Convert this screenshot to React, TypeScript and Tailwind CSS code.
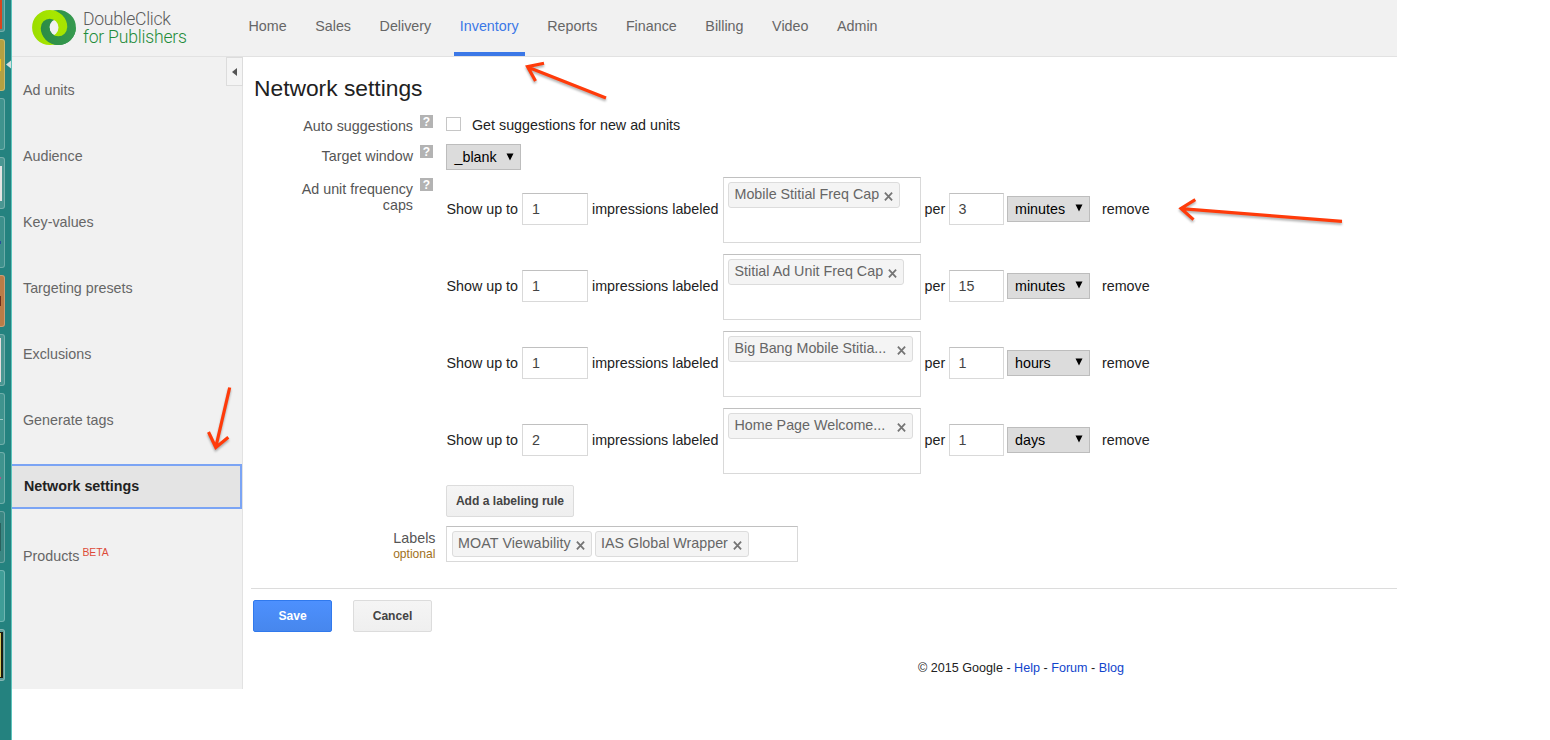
import React from 'react';

const navItems = ['Home', 'Sales', 'Delivery', 'Inventory', 'Reports', 'Finance', 'Billing', 'Video', 'Admin'];

const sideItems = ['Ad units', 'Audience', 'Key-values', 'Targeting presets', 'Exclusions', 'Generate tags'];

const launcherTiles = [
  'bg-[#4a9490]',
  'bg-[#b3a042]',
  'bg-[#3f938e]',
  'bg-[#4a9692]',
  'bg-[#3d908c]',
  'bg-[#b97c47]',
  'bg-[#4a9692]',
  'bg-[#3f938e]',
  'bg-[#3f938e]',
  'bg-[#3a8783]',
  'bg-[#3f9d97]',
  'bg-[#5c9f9b]',
];

const launcherIcons = [
  'w-[2px] h-[46px] bg-[#d9451f]',
  'w-[1px] h-[12px] bg-[#f3c51c]',
  '',
  'w-[2px] h-[35px] bg-[#e4e4e4]',
  'w-[1px] h-[3px] bg-[#2a4f9b]',
  'w-[1px] h-[10px] bg-[#6b2f1c]',
  'w-[1px] h-[44px] bg-[#e6dede]',
  'w-[3px] h-[1px] bg-[#9cc9c6]',
  'w-[1px] h-[2px] bg-[#b0508a]',
  'w-[1px] h-[28px] bg-[#2b605d]',
  '',
  'w-[3px] h-[46px] border-r-2 border-y border-[#1d1b12] bg-[#d9c95c]',
];

const rules = [
  { count: '1', label: 'Mobile Stitial Freq Cap', clipped: false, n: '3', unit: 'minutes' },
  { count: '1', label: 'Stitial Ad Unit Freq Cap', clipped: false, n: '15', unit: 'minutes' },
  { count: '1', label: 'Big Bang Mobile Stitia...', clipped: true, n: '1', unit: 'hours' },
  { count: '2', label: 'Home Page Welcome...', clipped: true, n: '1', unit: 'days' },
];

function Launcher() {
  return (
    <div className="relative flex h-full w-3 shrink-0 flex-col gap-[7px] overflow-hidden border-r border-[#5cc4bc] bg-[#24827f]">
      {launcherTiles.map((tile, i) => (
        <div
          key={i}
          className={`flex h-[52px] w-[5px] shrink-0 items-center rounded-r-[3px] border-y border-r border-[#ffffff40] ${tile} ${i === 0 ? '-mt-5' : ''}`}
        >
          <div className={launcherIcons[i]} />
        </div>
      ))}
      <svg className="absolute left-[6px] top-[60px]" width="5" height="9" viewBox="0 0 5 9">
        <path d="M5 0.5V8.5L0 4.5Z" fill="#d9dedd" />
      </svg>
    </div>
  );
}

function Logo() {
  return (
    <svg width="44" height="37" viewBox="0 0 44 37" className="shrink-0">
      <defs>
        <linearGradient id="lime" gradientUnits="userSpaceOnUse" x1="0" y1="0" x2="35" y2="0">
          <stop offset="0" stopColor="#9bdd00" />
          <stop offset="0.6" stopColor="#a8e600" />
          <stop offset="1" stopColor="#a6e400" />
        </linearGradient>
        <linearGradient id="forest" gradientUnits="userSpaceOnUse" x1="9" y1="0" x2="44" y2="0">
          <stop offset="0" stopColor="#2c8c45" />
          <stop offset="1" stopColor="#369a4f" />
        </linearGradient>
      </defs>
      <circle cx="26.3" cy="18.5" r="13.2" fill="none" stroke="url(#forest)" strokeWidth="8.8" />
      <circle cx="17.7" cy="18.5" r="13.2" fill="none" stroke="url(#lime)" strokeWidth="8.8" />
      <path d="M13.1 18.5A13.2 13.2 0 0 0 39.5 18.5" fill="none" stroke="url(#forest)" strokeWidth="8.8" />
    </svg>
  );
}

function Help() {
  return (
    <span className="ml-[7px] flex h-[13px] w-[13px] shrink-0 items-center justify-center bg-[#b3b3b3] text-[12px] font-bold leading-none text-white">
      ?
    </span>
  );
}

function Select({ value, width }: { value: string; width: string }) {
  return (
    <div className={`flex h-[26px] shrink-0 items-center justify-between border border-[#bdbdbd] bg-[#dcdcdc] pl-[7.5px] pr-[6px] pt-[2px] text-black ${width}`}>
      <span>{value}</span>
      <svg width="8" height="8" viewBox="0 0 8 8" className="mb-[3px]">
        <path d="M0.5 0.5H7.5L4 7.5Z" fill="#000" />
      </svg>
    </div>
  );
}

function Chip({ label, clipped = false }: { label: string; clipped?: boolean }) {
  return (
    <div
      className={`flex h-[26px] shrink-0 items-center whitespace-nowrap rounded-[3px] border border-[#dcdcdc] bg-[#f4f4f4] pl-[5.5px] text-[#666] ${clipped ? 'w-[185px] justify-between pr-[6px]' : 'pr-[6px]'}`}
    >
      <span>{label}</span>
      <svg width="9" height="9" viewBox="0 0 9 9" className="ml-[5px] mt-[3px] shrink-0">
        <path d="M0.9 0.7L8.1 8.3M8.1 0.7L0.9 8.3" stroke="#757575" strokeWidth="1.8" />
      </svg>
    </div>
  );
}

function Input({ value, width }: { value: string; width: string }) {
  return (
    <div className={`flex h-8 shrink-0 items-center border border-[#d9d9d9] border-t-[#c0c0c0] bg-white pl-[9px] pt-[2px] text-[#444] ${width}`}>
      {value}
    </div>
  );
}

function Header() {
  return (
    <header className="flex h-[57px] shrink-0 border-b border-[#e2e2e2] bg-[#f1f1f1]">
      <div className="flex w-[230.5px] shrink-0 pl-5 pt-[9px]">
        <Logo />
        <div className="ml-[7px] flex flex-col whitespace-nowrap pt-[2px] font-['Roboto'] text-[17.6px] font-light leading-[17.5px]">
          <span className="tracking-[-0.3px] text-[#5c5c5c]">DoubleClick</span>
          <span className="tracking-[-0.2px] text-[#1f8c3a]">for Publishers</span>
        </div>
      </div>
      <nav className="flex gap-[16.6px]">
        {navItems.map((item) => (
          <a
            key={item}
            className={`flex h-[56px] items-center border-b-4 px-[6px] pb-[1px] pt-[2px] ${item === 'Inventory' ? 'border-[#3b78e7] text-[#3b78e7]' : 'border-transparent text-[#666]'}`}
          >
            {item}
          </a>
        ))}
      </nav>
    </header>
  );
}

function Sidebar() {
  return (
    <aside className="relative flex h-[632px] w-[231px] shrink-0 flex-col gap-[22px] border-r border-[#e2e2e2] bg-[#f1f1f1] pt-[11px] text-[#666]">
      {sideItems.map((item) => (
        <a key={item} className="flex h-11 items-center pl-[11px] pt-[2px]">
          {item}
        </a>
      ))}
      <a className="flex h-[45px] items-center border-2 border-l-0 border-[#7ba4f4] bg-[#e4e4e4] pl-3 pt-px font-bold text-[#222]">
        Network settings
      </a>
      <a className="flex h-[52px] items-center pl-[11px]">
        Products
        <span className="mb-2 ml-[3px] text-[10.4px] text-[#dd4b39]">BETA</span>
      </a>
      <div className="absolute -right-px top-0 flex h-[29px] w-[17px] items-center justify-center border border-[#dcdcdc] bg-[#f4f4f4] pr-px">
        <svg width="5" height="8" viewBox="0 0 5 8">
          <path d="M5 0V8L0 4Z" fill="#555" />
        </svg>
      </div>
    </aside>
  );
}

function Label({ children }: { children: React.ReactNode }) {
  return <div className="w-[170px] shrink-0 text-right leading-[16.4px] text-[#555]">{children}</div>;
}

function Settings() {
  return (
    <main className="flex min-w-0 flex-1 flex-col text-[#222]">
      <h1 className="mt-[18px] h-[26px] pl-[11px] text-[22.8px] leading-[26px] text-[#212121]">Network settings</h1>

      <div className="mt-[14px] flex h-[29px] items-start">
        <div className="pt-[3px]">
          <Label>Auto suggestions</Label>
        </div>
        <Help />
        <div className="ml-[13.4px] mt-[2px] h-[14px] w-[15px] shrink-0 border border-[#c6c6c6] bg-white" />
        <span className="ml-[10.6px] mt-[2px] leading-[16.5px]">Get suggestions for new ad units</span>
      </div>

      <div className="flex h-[33px] items-start">
        <div className="pt-[4px]">
          <Label>Target window</Label>
        </div>
        <div className="pt-px">
          <Help />
        </div>
        <div className="ml-[13px]">
          <Select value="_blank" width="w-[75px]" />
        </div>
      </div>

      <div className="flex items-start">
        <div className="pt-[4px]">
          <Label>
            Ad unit frequency
            <br />
            caps
          </Label>
        </div>
        <div className="pt-px">
          <Help />
        </div>
        <div className="ml-[13px] flex flex-col gap-[11px]">
          {rules.map((rule) => (
            <div key={rule.label} className="flex h-[66px] items-center whitespace-nowrap">
              <span className="w-[76px] shrink-0 pl-[0.5px]">Show up to</span>
              <div className="-mt-[3px]">
                <Input value={rule.count} width="w-[66px]" />
              </div>
              <span className="ml-1 w-[130.5px] shrink-0">impressions labeled</span>
              <div className="flex h-[66px] w-[198px] shrink-0 items-start border border-[#d9d9d9] border-t-[#c0c0c0] p-1 pl-[4.5px]">
                <Chip label={rule.label} clipped={rule.clipped} />
              </div>
              <span className="ml-[4px] w-[24px] shrink-0">per</span>
              <div className="-mt-[3px]">
                <Input value={rule.n} width="w-[55px]" />
              </div>
              <div className="-mt-[3px] ml-[3px]">
                <Select value={rule.unit} width="w-[83px]" />
              </div>
              <span className="ml-[12.5px]">remove</span>
            </div>
          ))}
        </div>
      </div>

      <div className="mt-[11px] pl-[203px]">
        <button className="block h-8 w-[128px] whitespace-nowrap rounded-[2px] border border-[#dcdcdc] bg-linear-to-b from-[#f5f5f5] to-[#efefef] text-[12.1px] font-bold text-[#444]">
          Add a labeling rule
        </button>
      </div>

      <div className="mt-[9px] flex h-[36px] items-start">
        <div className="w-[192.5px] shrink-0 pt-[3.5px] text-right leading-[16.5px] text-[#555]">
          Labels
          <div className="text-[12.1px] leading-[17px] text-[#a0701c]">optional</div>
        </div>
        <div className="ml-[10.5px] flex h-[36px] w-[352px] items-start gap-[3px] border border-[#d9d9d9] border-t-[#c0c0c0] p-1 pl-[4.5px]">
          <div className="w-[140px] tracking-[0.1px]">
            <Chip label="MOAT Viewability" />
          </div>
          <Chip label="IAS Global Wrapper" />
        </div>
      </div>

      <div className="ml-[8px] mt-[26px] flex h-11 items-end gap-[21px] border-t border-[#dcdcdc] pl-[2px] text-[12.1px] font-bold">
        <button className="h-8 w-[79px] rounded-[2px] border border-[#3079ed] bg-linear-to-b from-[#4d90fe] to-[#4787ed] text-white">
          Save
        </button>
        <button className="h-8 w-[79px] rounded-[2px] border border-[#dcdcdc] bg-linear-to-b from-[#f5f5f5] to-[#efefef] text-[#444]">
          Cancel
        </button>
      </div>

      <footer className="mt-[28px] pl-[675px] text-[12.6px] leading-4 text-[#222]">
        © 2015 Google - <a className="text-[#1144cc]">Help</a> - <a className="text-[#1144cc]">Forum</a> -{' '}
        <a className="text-[#1144cc]">Blog</a>
      </footer>
    </main>
  );
}

function Arrows() {
  return (
    <svg
      className="pointer-events-none absolute left-0 top-0 drop-shadow-[0_2px_1px_rgba(0,0,0,0.3)]"
      width="1550"
      height="740"
      viewBox="0 0 1550 740"
      fill="none"
      stroke="#ff3b0a"
      strokeWidth="3.2"
    >
      <path d="M606 98L527.5 67M544 63.2L527.5 66.6L535.5 81" />
      <path d="M1342 221.3L1181 208.6M1195.3 199.6L1181 208.4L1193.5 219.6" />
      <path d="M229.7 387.5L215.8 447M208.5 432L215.8 447.5L228.3 437.3" />
    </svg>
  );
}

export default function App() {
  return (
    <div className="relative flex h-[740px] w-[1550px] overflow-hidden bg-white font-['Liberation_Sans',Arial,sans-serif] text-[14.3px]">
      <Launcher />
      <div className="flex w-[1385px] shrink-0 flex-col">
        <Header />
        <div className="flex">
          <Sidebar />
          <Settings />
        </div>
      </div>
      <Arrows />
    </div>
  );
}
